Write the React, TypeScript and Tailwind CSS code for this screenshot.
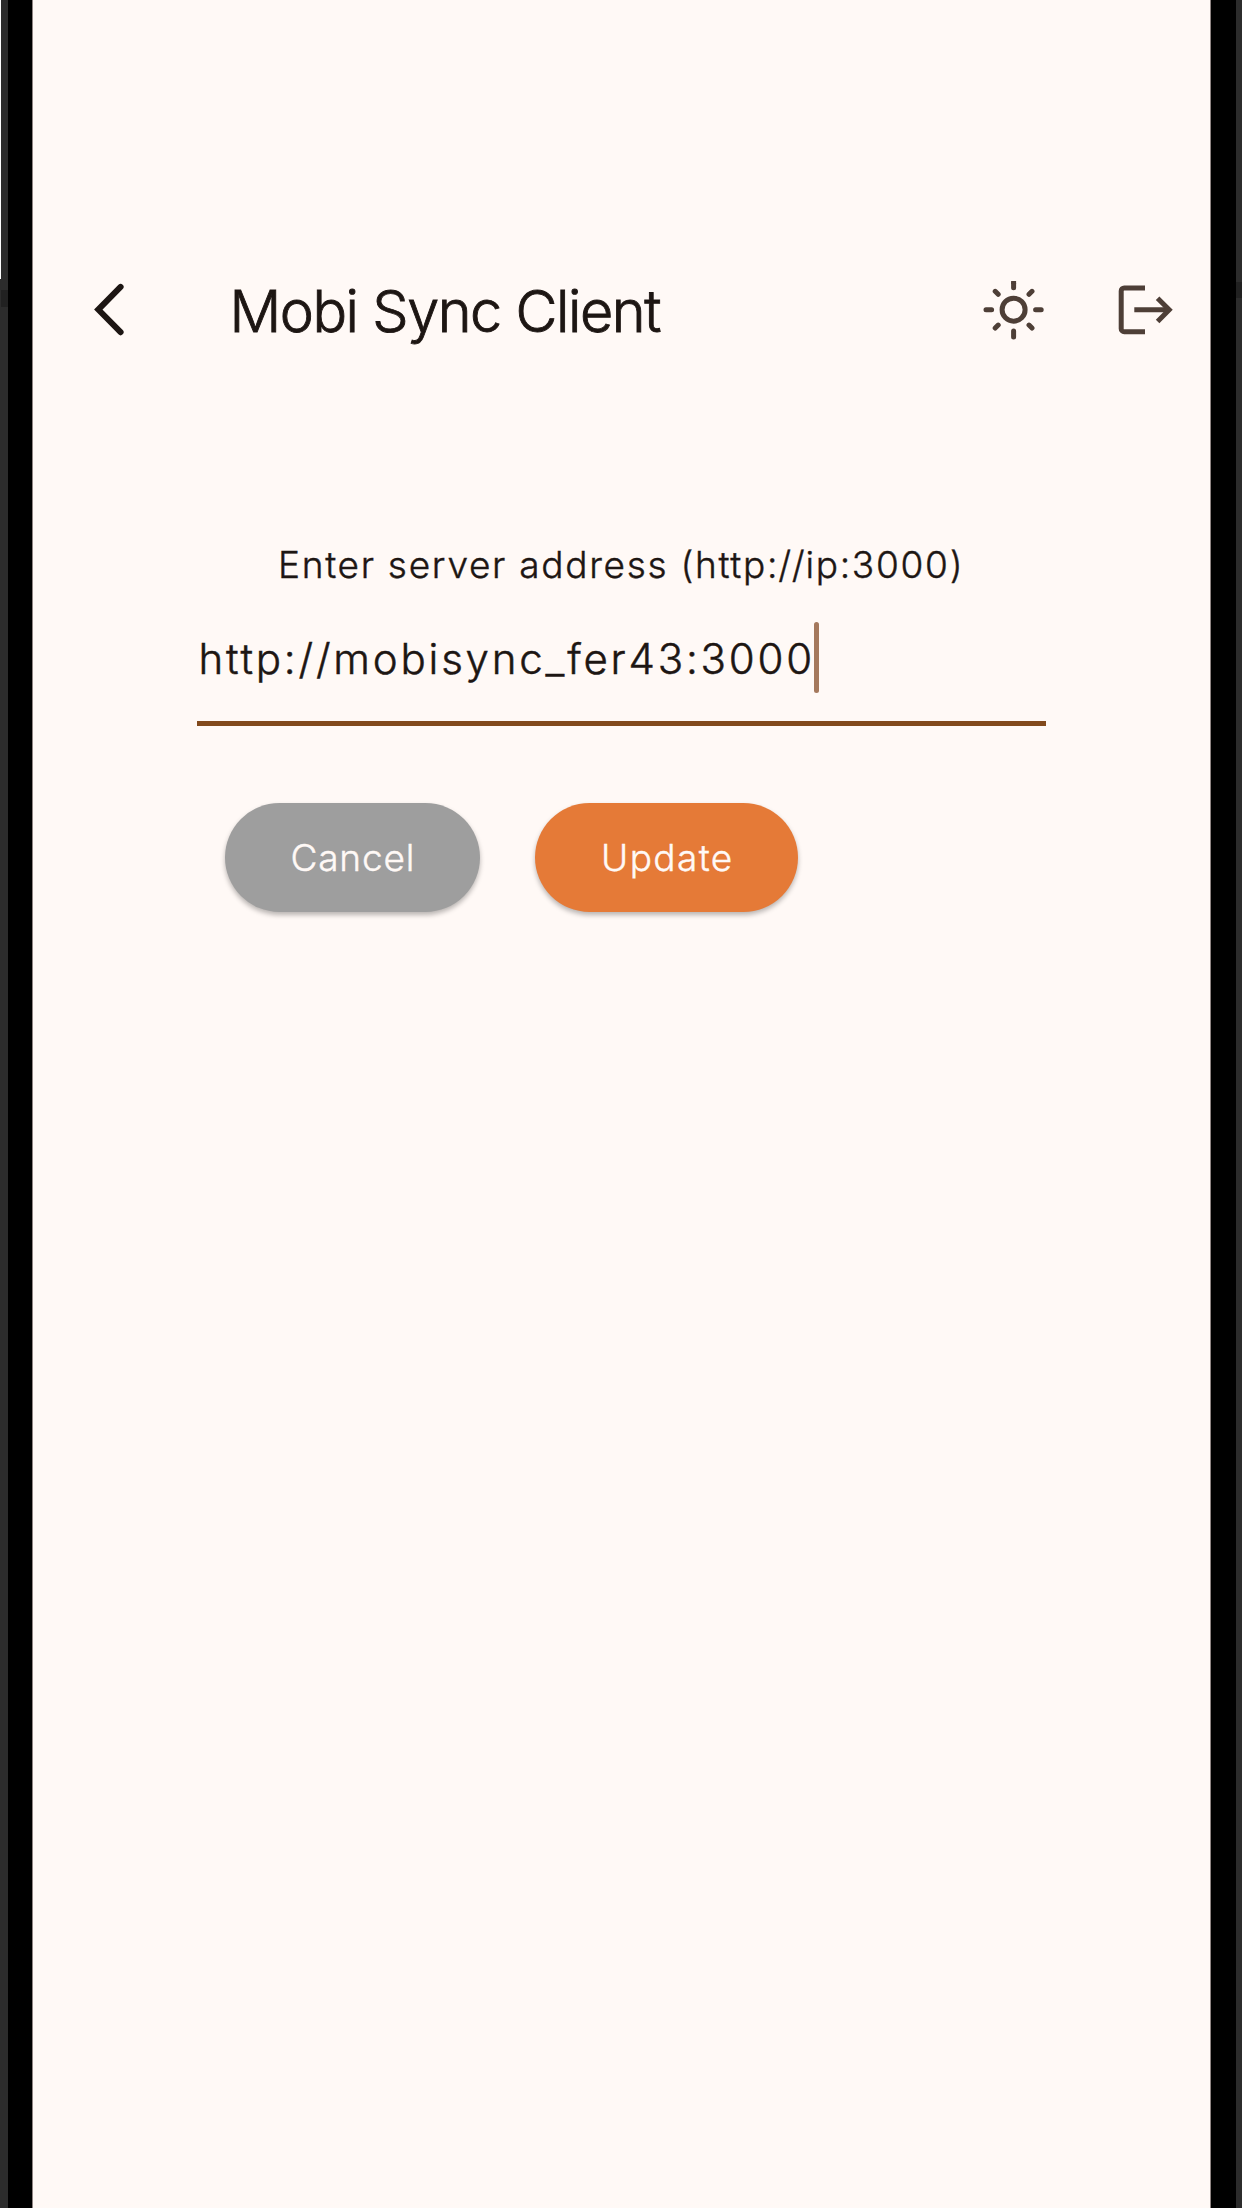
import React from 'react';

function BackIcon() {
  return (
    <svg width="40" height="60" viewBox="0 0 40 60" fill="none" stroke="#1d1613" strokeWidth="6" strokeLinecap="round" strokeLinejoin="miter">
      <path d="M31.6 6.9 9.3 29.6 31.6 52.2" />
    </svg>
  );
}

function SunIcon() {
  return (
    <svg width="68" height="60" viewBox="0 0 68 60" fill="none" stroke="#4e3f37" strokeWidth="5" strokeLinecap="round">
      <circle cx="33.6" cy="29.7" r="11.5" strokeWidth="5" />
      <path d="M6 29.7h5.6M55.6 29.7h5.6M33.6 51v6M15.2 11.3l3 3M52 11.3l-3 3M15.2 48.1l3-3M52 48.1l-3-3" />
      <path d="M33.6 3.4v4.4" />
      <path d="M33.6 1v3" strokeLinecap="butt" />
    </svg>
  );
}

function LogoutIcon() {
  return (
    <svg width="60" height="60" viewBox="0 0 60 60" fill="none" stroke="#4e3f37" strokeWidth="5">
      <path d="M31 7.9H10.2a3 3 0 0 0-3 3v37.8a3 3 0 0 0 3 3H31" />
      <path d="M20.3 29.8H54" />
      <path d="M43.6 18.2 55.2 29.8 43.6 41.4" />
    </svg>
  );
}

export default function App() {
  return (
    <div className="flex h-[2208px] w-[1242px] overflow-hidden bg-black font-['Inter',sans-serif]">
      <aside className="flex w-8 shrink-0">
        <div className="flex w-px flex-col">
          <div className="h-[279px] bg-white" />
          <div className="grow bg-[#2c2c2c]" />
        </div>
        <div className="flex w-[7px] flex-col bg-[#2c2c2c]">
          <div className="mt-[290px] h-[17px] bg-[#212121]" />
        </div>
      </aside>

      <main className="w-[1179px] shrink-0 border-x border-[#8f8583] bg-[#fff9f6]">
        <header className="mt-[280px] flex h-[60px] items-center">
          <button className="ml-[55.5px] block" aria-label="Back">
            <BackIcon />
          </button>
          <h1 className="ml-[101px] grow whitespace-nowrap pt-0.5 text-[57.5px] leading-[60px] font-light tracking-[-1.45px] text-[#1d1613] [-webkit-text-stroke:0.9px_#1d1613]">
            Mobi Sync Client
          </h1>
          <button className="mr-[66px] block" aria-label="Theme">
            <SunIcon />
          </button>
          <button className="mr-[36px] block" aria-label="Log out">
            <LogoutIcon />
          </button>
        </header>

        <section className="ml-[164px] w-[849px] pt-[205px]">
          <p className="pl-[81px] whitespace-nowrap text-[37px] leading-[40px] font-light tracking-[1.7px] text-[#1d1613] [-webkit-text-stroke:0.4px_#1d1613]">
            Enter server address (http<span className="tracking-[0.7px]">://</span>ip:3000)
          </p>
          <div className="mt-[37px] flex h-[104px] items-start border-b-[5px] border-[#824a1c]">
            <span className="w-[616.5px] pl-[1.5px] pt-px whitespace-nowrap text-[42px] leading-[72px] font-light tracking-[2.8px] text-[#1d1613] [-webkit-text-stroke:0.5px_#1d1613]">
              http://mobisync_fer43:3000
            </span>
            <span className="h-[71px] w-[5.5px] rounded-full bg-[#a5795d]" />
          </div>
          <div className="mt-[76.5px] flex gap-[55px] pl-[27.5px] text-[37px] leading-[109px] font-light [-webkit-text-stroke:0.4px_#fff9f6]">
            <button className="h-[109.5px] w-[255.5px] rounded-full bg-[#9e9e9e] pb-px pl-[66px] text-left tracking-[0.8px] text-[#fff9f6] shadow-[0_3px_5px_rgba(0,0,0,0.28)]">
              Cancel
            </button>
            <button className="h-[109.5px] w-[263px] rounded-full bg-[#e57a37] pb-px pl-[66px] text-left tracking-[1.4px] text-[#fff9f6] shadow-[0_3px_5px_rgba(0,0,0,0.28)]">
              Update
            </button>
          </div>
        </section>
      </main>

      <aside className="flex grow justify-end">
        <div className="flex w-1.5 flex-col bg-[#2c2c2c]">
          <div className="mt-[282px] h-[16px] bg-[#212121]" />
        </div>
      </aside>
    </div>
  );
}
